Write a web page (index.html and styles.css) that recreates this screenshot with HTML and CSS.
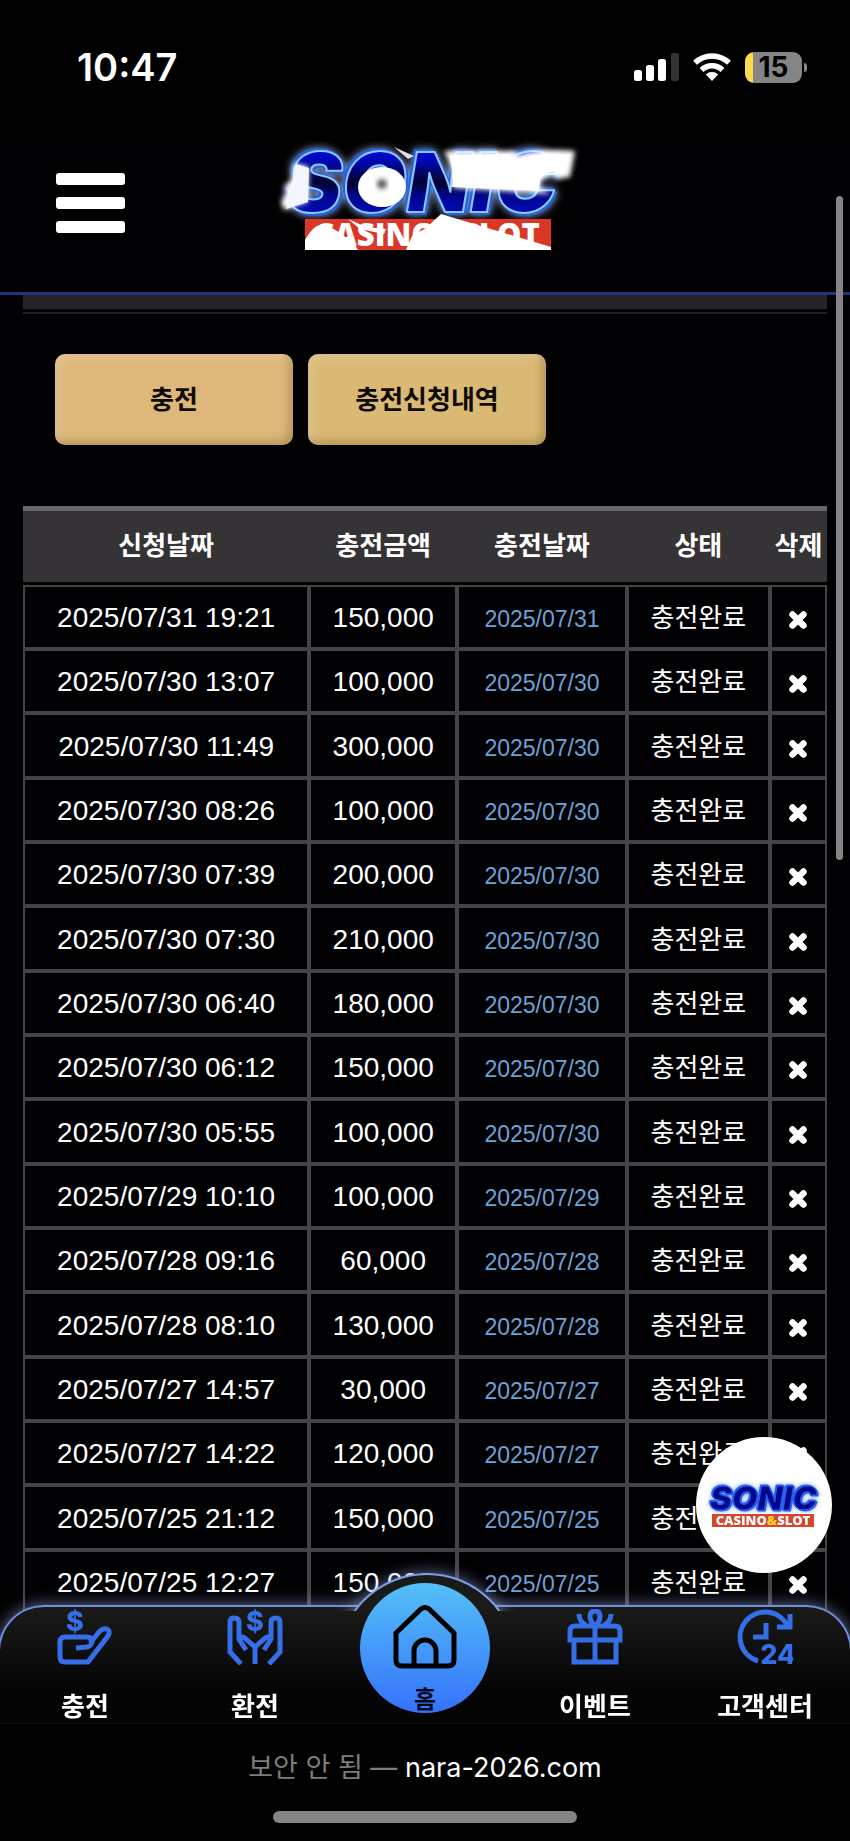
FILE: index.html
```html
<!DOCTYPE html>
<html lang="ko">
<head>
    <meta charset="UTF-8">
    <meta name="viewport" content="width=device-width, initial-scale=1.0">
    <title>충전신청내역</title>
    <link rel="stylesheet" href="styles.css">
</head>
<body>

    <!-- Status bar -->
    <div class="status-bar">
        <span class="clock">10:47</span>
        <div class="status-icons">
            <svg width="45" height="28" viewBox="0 0 45 28">
                <rect x="0" y="17" width="8" height="11" rx="2.5" fill="#fff"/>
                <rect x="12" y="12" width="8" height="16" rx="2.5" fill="#fff"/>
                <rect x="24" y="6" width="8" height="22" rx="2.5" fill="#fff"/>
                <rect x="37" y="0" width="8" height="28" rx="2.5" fill="#333"/>
            </svg>
            <svg width="38" height="28" viewBox="0 0 38 28">
                <g fill="none" stroke="#fff" stroke-width="5.4">
                    <path d="M2 9.8A24.500 24.500 0 0 1 36 9.800"/>
                    <path d="M8.500 17A15 15 0 0 1 29.500 17"/>
                </g>
                <path d="M19 28l-6.200-6.500a9 9 0 0 1 12.400 0z" fill="#fff"/>
            </svg>
            <div class="battery">15</div>
        </div>
    </div>

    <!-- Header -->
    <header class="header">
        <button class="menu-btn" aria-label="메뉴">
            <span></span>
            <span></span>
            <span></span>
        </button>
        <a class="logo" href="#" aria-label="Sonic Casino&amp;Slot">
            <svg width="330" height="130" viewBox="260 138 330 130">
                <defs>
                    <linearGradient id="letter" x1="0" y1="0" x2="0" y2="1">
                        <stop offset="0" stop-color="#0008c8"/>
                        <stop offset=".25" stop-color="#0008c8"/>
                        <stop offset=".5" stop-color="#00022e"/>
                        <stop offset=".65" stop-color="#000690"/>
                        <stop offset="1" stop-color="#0010d8"/>
                    </linearGradient>
                    <filter id="soft" x="-20%" y="-40%" width="140%" height="180%"><feGaussianBlur stdDeviation="2.5"/></filter>
                </defs>
                <text class="sonic" x="287" y="212">SONIC</text>
                <path d="M294 163l15 4-1 35-24 8-3-8 6-10-3-5 8-8z" fill="#fff" filter="url(#soft)"/>
                <path d="M296 164l13 4-1 34-22 7 5-21z" fill="#f4f6ff"/>
                <ellipse cx="382" cy="187" rx="24" ry="20" fill="#fff"/>
                <circle cx="382" cy="184" r="5" fill="#555" filter="url(#soft)"/>
                <path d="M394 147l20 9-6 3z" fill="#ddd"/>
                <path d="M444 151h70l4 4q20-7 57-4l-5 26-14 2-3-5-10 5-4 8 12 7-98-6q3-16-9-37z" fill="#fff" filter="url(#soft)"/>
                <path d="M449 156l60-2 8 6q20-8 52-5l-4 17q-20-3-25 8l-1 11-87-4q2-16-3-31z" fill="#fff"/>
                <rect x="305" y="219" width="246" height="31" fill="#dc3726"/>
                <text class="casino" x="427" y="246" text-anchor="middle">CASINO&amp;SLOT</text>
                <path d="M305 240q10-17 18-15 12 2 32 20l3 5h-53z" fill="#fff"/>
                <path d="M348 219l18 8 20 2-2 5-24-5z" fill="#fff"/>
                <path d="M406 250l6-14 14-8 15-14 110 33v3z" fill="#fff"/>
            </svg>
        </a>
    </header>

    <main>
        <div class="panel-edge"></div>

        <div class="tabs">
            <button class="tab-btn">충전</button>
            <button class="tab-btn gold">충전신청내역</button>
        </div>

        <!-- Deposit history -->
        <table class="history">
            <colgroup>
                <col class="col-requested">
                <col class="col-amount">
                <col class="col-date">
                <col class="col-state">
                <col class="col-delete">
            </colgroup>
            <thead>
                <tr><th>신청날짜</th><th>충전금액</th><th>충전날짜</th><th>상태</th><th>삭제</th></tr>
            </thead>
            <tbody>
                <tr><td>2025/07/31 19:21</td><td>150,000</td><td class="date">2025/07/31</td><td class="state">충전완료</td><td><button class="delete" aria-label="삭제"><svg viewBox="0 0 20 20"><use href="#cross"/></svg></button></td></tr>
                <tr><td>2025/07/30 13:07</td><td>100,000</td><td class="date">2025/07/30</td><td class="state">충전완료</td><td><button class="delete" aria-label="삭제"><svg viewBox="0 0 20 20"><use href="#cross"/></svg></button></td></tr>
                <tr><td>2025/07/30 11:49</td><td>300,000</td><td class="date">2025/07/30</td><td class="state">충전완료</td><td><button class="delete" aria-label="삭제"><svg viewBox="0 0 20 20"><use href="#cross"/></svg></button></td></tr>
                <tr><td>2025/07/30 08:26</td><td>100,000</td><td class="date">2025/07/30</td><td class="state">충전완료</td><td><button class="delete" aria-label="삭제"><svg viewBox="0 0 20 20"><use href="#cross"/></svg></button></td></tr>
                <tr><td>2025/07/30 07:39</td><td>200,000</td><td class="date">2025/07/30</td><td class="state">충전완료</td><td><button class="delete" aria-label="삭제"><svg viewBox="0 0 20 20"><use href="#cross"/></svg></button></td></tr>
                <tr><td>2025/07/30 07:30</td><td>210,000</td><td class="date">2025/07/30</td><td class="state">충전완료</td><td><button class="delete" aria-label="삭제"><svg viewBox="0 0 20 20"><use href="#cross"/></svg></button></td></tr>
                <tr><td>2025/07/30 06:40</td><td>180,000</td><td class="date">2025/07/30</td><td class="state">충전완료</td><td><button class="delete" aria-label="삭제"><svg viewBox="0 0 20 20"><use href="#cross"/></svg></button></td></tr>
                <tr><td>2025/07/30 06:12</td><td>150,000</td><td class="date">2025/07/30</td><td class="state">충전완료</td><td><button class="delete" aria-label="삭제"><svg viewBox="0 0 20 20"><use href="#cross"/></svg></button></td></tr>
                <tr><td>2025/07/30 05:55</td><td>100,000</td><td class="date">2025/07/30</td><td class="state">충전완료</td><td><button class="delete" aria-label="삭제"><svg viewBox="0 0 20 20"><use href="#cross"/></svg></button></td></tr>
                <tr><td>2025/07/29 10:10</td><td>100,000</td><td class="date">2025/07/29</td><td class="state">충전완료</td><td><button class="delete" aria-label="삭제"><svg viewBox="0 0 20 20"><use href="#cross"/></svg></button></td></tr>
                <tr><td>2025/07/28 09:16</td><td>60,000</td><td class="date">2025/07/28</td><td class="state">충전완료</td><td><button class="delete" aria-label="삭제"><svg viewBox="0 0 20 20"><use href="#cross"/></svg></button></td></tr>
                <tr><td>2025/07/28 08:10</td><td>130,000</td><td class="date">2025/07/28</td><td class="state">충전완료</td><td><button class="delete" aria-label="삭제"><svg viewBox="0 0 20 20"><use href="#cross"/></svg></button></td></tr>
                <tr><td>2025/07/27 14:57</td><td>30,000</td><td class="date">2025/07/27</td><td class="state">충전완료</td><td><button class="delete" aria-label="삭제"><svg viewBox="0 0 20 20"><use href="#cross"/></svg></button></td></tr>
                <tr><td>2025/07/27 14:22</td><td>120,000</td><td class="date">2025/07/27</td><td class="state">충전완료</td><td><button class="delete" aria-label="삭제"><svg viewBox="0 0 20 20"><use href="#cross"/></svg></button></td></tr>
                <tr><td>2025/07/25 21:12</td><td>150,000</td><td class="date">2025/07/25</td><td class="state">충전완료</td><td><button class="delete" aria-label="삭제"><svg viewBox="0 0 20 20"><use href="#cross"/></svg></button></td></tr>
                <tr><td>2025/07/25 12:27</td><td>150,000</td><td class="date">2025/07/25</td><td class="state">충전완료</td><td><button class="delete" aria-label="삭제"><svg viewBox="0 0 20 20"><use href="#cross"/></svg></button></td></tr>
            </tbody>
        </table>
    </main>

    <div class="scroll-thumb"></div>

    <!-- Floating badge -->
    <a class="badge" href="#" aria-label="Sonic Casino&amp;Slot">
        <svg width="136" height="136" viewBox="696 1437 136 136">
            <text class="sonic small" x="710" y="1510">SONIC</text>
            <rect x="712" y="1514" width="102" height="13" fill="#d8452f"/>
            <text class="casino small" x="763" y="1525" text-anchor="middle">CASINO<tspan fill="#ffd42a">&amp;</tspan>SLOT</text>
        </svg>
    </a>

    <!-- Bottom navigation -->
    <div class="bottom">
        <nav class="nav">
            <a href="#">
                <svg class="icon" viewBox="0 0 56 56">
                    <text x="18" y="22" text-anchor="middle">$</text>
                    <path d="M19 39l11-1q4-1 5-5 0-5-5-5H8q-5 0-5 5v15q0 5 5 5h23l20-26q3-5-1-7-4-1-7 2L33 34"/>
                </svg>
                <span>충전</span>
            </a>
            <a href="#">
                <svg class="icon" viewBox="0 0 56 56">
                    <text x="28" y="22" text-anchor="middle">$</text>
                    <path d="M14 55L3 43V13q0-4 4-4 5 0 5 4v17l7 11M12 28q4-1 7 2l9 8v17M42 55l11-12V13q0-4-4-4-5 0-5 4v17l-7 11M44 28q-4-1-7 2l-9 8"/>
                </svg>
                <span>환전</span>
            </a>
            <a class="home" href="#">
                <svg viewBox="0 0 64 64">
                    <path d="M3 28L28 4q4-3 8 0l25 24v27q0 6-6 6H9q-6 0-6-6zM21 61V46a11 11 0 0 1 22 0v15"/>
                </svg>
                <span>홈</span>
            </a>
            <a href="#">
                <svg class="icon" viewBox="0 0 56 56">
                    <path d="M3 31v-9q0-5 5-5h40q5 0 5 5v9zM7 31h42v22H7zM28 17v36M28 17q-5-5-5-9 0-6 5-6t5 6q0 4-5 9M12 5q0 8 7 11M44 5q0 8-7 11"/>
                </svg>
                <span>이벤트</span>
            </a>
            <a href="#">
                <svg class="icon" viewBox="0 0 56 56">
                    <path d="M21 52A25 25 0 1 1 51 18M40 18h13V5M29 14v14H16"/>
                    <text x="41" y="55" text-anchor="middle">24</text>
                </svg>
                <span>고객센터</span>
            </a>
        </nav>
        <div class="address">
            <p><span>보안 안 됨 —</span> nara-2026.com</p>
            <div class="home-indicator"></div>
        </div>
    </div>

    <svg class="sprite">
        <symbol id="cross" viewBox="0 0 20 20">
            <path d="M4.500 4.500l11 11M15.500 4.500l-11 11" stroke="#fff" stroke-width="6.500" stroke-linecap="round"/>
        </symbol>
    </svg>

</body>
</html>
```

FILE: styles.css
```css
* {
    box-sizing: border-box;
}

body {
    margin: 0;
    background: #010002;
    color: #fff;
    font-family: "Liberation Sans", "Noto Sans CJK KR", sans-serif;
    overflow-x: hidden;
}

a {
    color: inherit;
    text-decoration: none;
}

button {
    border: 0;
    padding: 0;
    background: none;
    color: inherit;
    font-family: inherit;
    cursor: pointer;
}

/* Status bar */
.status-bar {
    display: flex;
    justify-content: space-between;
    align-items: center;
    height: 134px;
    padding: 0 43px 0 77px;
    background: #000;
}

.clock {
    font-family: Inter, sans-serif;
    font-size: 38px;
    font-weight: 600;
}

.status-icons {
    display: flex;
    align-items: center;
    gap: 14px;
}

.battery {
    position: relative;
    width: 57px;
    height: 31px;
    margin-right: 5px;
    border-radius: 9px;
    background: linear-gradient(90deg, #fbdb4c 8px, #858585 8px);
    color: #000;
    font-family: Inter, sans-serif;
    font-size: 28px;
    font-weight: 700;
    line-height: 31px;
    text-align: center;
}

.battery::after {
    content: "";
    position: absolute;
    right: -5px;
    top: 11px;
    width: 3px;
    height: 9px;
    border-radius: 0 4px 4px 0;
    background: #858585;
}

/* Header */
.header {
    display: grid;
    grid-template-columns: 1fr auto 1fr;
    align-items: center;
    padding: 4px 56px 24px;
    border-bottom: 3px solid #22357c;
}

.menu-btn {
    display: flex;
    flex-direction: column;
    gap: 12px;
    width: 69px;
}

.menu-btn span {
    height: 12px;
    border-radius: 3px;
    background: #fff;
}

.logo svg,
.badge svg {
    display: block;
    overflow: visible;
}

.sonic {
    fill: url(#letter);
    stroke: #8cc8ff;
    stroke-width: 2px;
    stroke-linejoin: round;
    font-family: Inter, sans-serif;
    font-size: 83px;
    font-weight: 900;
    font-style: italic;
    filter: drop-shadow(2px 2px 0 #2462d8) drop-shadow(-2px -2px 0 #2462d8) drop-shadow(0 0 4px #8f9ccc);
}

.sonic.small {
    fill: #00098c;
    stroke: #2a5cf0;
    stroke-width: 1px;
    font-size: 33px;
    filter: drop-shadow(1px 1px 0 #2a5cf0) drop-shadow(-1px -1px 0 #2a5cf0) drop-shadow(0 0 2px #6f9cff);
}

.casino {
    fill: #fff;
    font-family: "Open Sans", sans-serif;
    font-size: 31px;
    font-weight: 800;
}

.casino.small {
    font-size: 13px;
}

main {
    padding: 0 23px;
}

.panel-edge {
    height: 19px;
    border-bottom: 2px solid #1f1e20;
    background: linear-gradient(#262426 14px, transparent 14px);
}

/* Buttons */
.tabs {
    display: flex;
    gap: 15px;
    padding: 40px 32px 61px;
}

.tab-btn {
    width: 238px;
    height: 91px;
    padding-bottom: 4px;
    border-radius: 10px;
    background: #ddb87a;
    color: #100a04;
    font-size: 26px;
    font-weight: 700;
    box-shadow: inset 4px 4px 8px rgba(255, 255, 255, 0.2), inset -4px -4px 8px rgba(90, 60, 10, 0.3);
}

.tab-btn.gold {
    background: #d9b974;
}

/* History table */
.history {
    width: 100%;
    table-layout: fixed;
    border-spacing: 0;
    text-align: center;
    font-size: 28px;
    line-height: 36px;
}

.col-requested { width: 35.6%; }
.col-amount { width: 18.4%; }
.col-date { width: 21.1%; }
.col-state { width: 17.8%; }
.col-delete { width: 7.1%; }

.history th {
    height: 79px;
    padding: 0 0 2px;
    border-top: 5px solid #68666a;
    border-bottom: 3px solid #000;
    background: #353335;
    font-size: 26px;
    font-weight: 700;
    white-space: nowrap;
}

.history td {
    height: 64px;
    padding: 2px 0 0;
    border: 2px solid #454346;
    white-space: nowrap;
}

.history tr:nth-child(3n) td {
    height: 65px;
}

.history .date {
    padding-top: 4px;
    color: #6ba3d8;
    font-size: 23px;
}

.history .state {
    font-size: 26px;
}

.delete {
    display: block;
    width: 20px;
    height: 20px;
    margin: 4px auto 0;
}

.delete svg {
    display: block;
}

.scroll-thumb {
    position: fixed;
    top: 196px;
    right: 7px;
    width: 7px;
    height: 664px;
    border-radius: 4px;
    background: #858386;
}

.badge {
    position: fixed;
    right: 18px;
    bottom: 268px;
    width: 136px;
    height: 136px;
    border-radius: 50%;
    background: #fff;
}

/* Bottom navigation */
.bottom {
    position: fixed;
    left: 0;
    right: 0;
    bottom: 0;
}

.nav {
    position: relative;
    display: grid;
    grid-template-columns: repeat(5, 1fr);
    height: 118px;
    margin: 0 -2px;
    border: 2px solid #6f8fdc;
    border-bottom: 0;
    border-radius: 46px 46px 0 0;
    background: linear-gradient(#1a1a19, #050506 70%);
    box-shadow: 0 0 16px rgba(160, 185, 240, 0.6);
}

/* raised arch behind the home button */
.nav::before {
    content: "";
    position: absolute;
    top: -34px;
    left: calc(50% - 88px);
    width: 176px;
    height: 176px;
    border: 2px solid #7d9ce6;
    border-radius: 50%;
    background: #1a1a19;
    box-shadow: 0 0 16px rgba(160, 185, 240, 0.6);
    clip-path: inset(-20px 0 142px 0);
}

.nav a {
    display: flex;
    flex-direction: column;
    align-items: center;
    justify-content: space-between;
    padding-top: 2px;
    font-size: 26px;
    font-weight: 700;
    line-height: 32px;
    white-space: nowrap;
}

.icon {
    width: 56px;
    height: 56px;
    fill: none;
    stroke: #356fe8;
    stroke-width: 5;
}

.icon text {
    fill: #356fe8;
    stroke: none;
    font-family: Inter, sans-serif;
    font-size: 27px;
    font-weight: 800;
}

.nav .home {
    position: relative;
    justify-self: center;
    width: 130px;
    height: 130px;
    margin-top: -24px;
    padding: 22px 0 0;
    border-radius: 50%;
    background: linear-gradient(#54c0f8, #3572fa);
    color: #03081c;
    font-size: 24px;
    line-height: 26px;
}

.home svg {
    width: 64px;
    height: 64px;
    fill: none;
    stroke: #000;
    stroke-width: 5;
}

.address {
    position: relative;
    height: 118px;
    padding-top: 26px;
    border-top: 1px solid #101012;
    background: #020203;
    text-align: center;
}

.address p {
    margin: 0;
    font-family: Inter, "Noto Sans CJK KR", sans-serif;
    font-size: 27px;
    line-height: 36px;
}

.address span {
    color: #7d7d7f;
}

.home-indicator {
    width: 304px;
    height: 12px;
    margin: 25px auto 0;
    border-radius: 6px;
    background: #858587;
}

.sprite {
    position: absolute;
    width: 0;
    height: 0;
}
```
